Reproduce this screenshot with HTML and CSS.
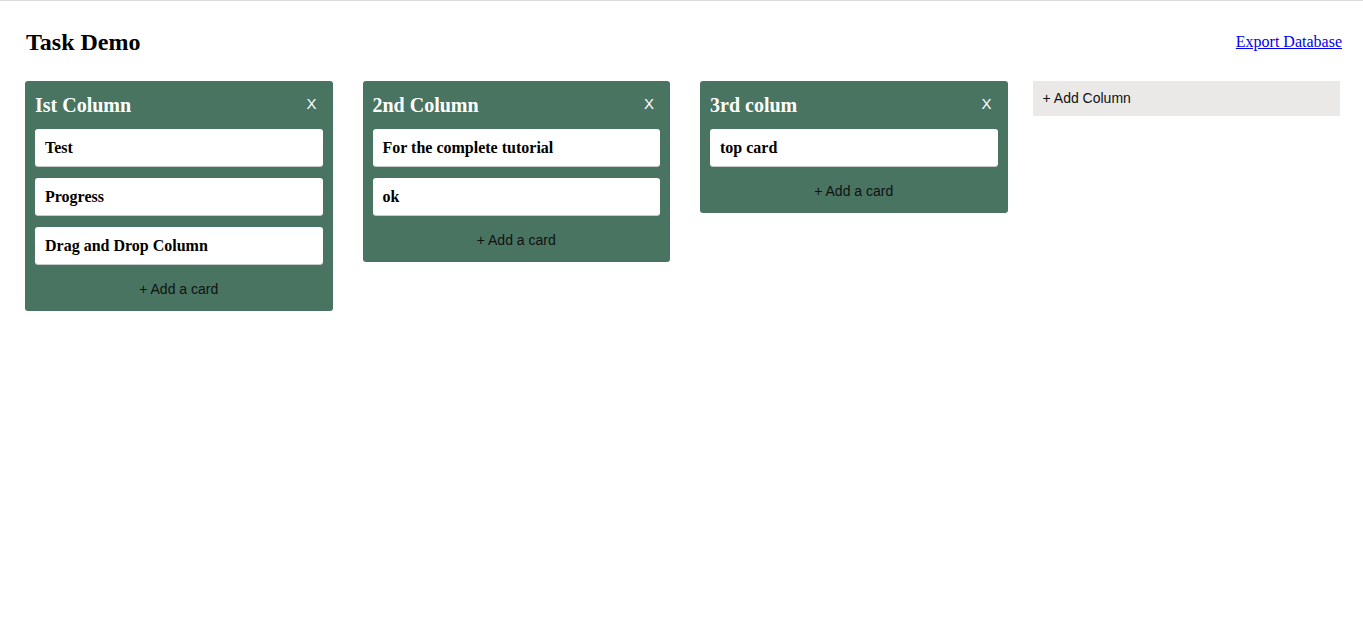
FILE: index.html
```html
<!DOCTYPE html>
<html>
<head>
<meta charset="utf-8">
<title>Task Demo</title>
<link rel="stylesheet" href="styles.css">
</head>
<body>
<div class="page">
  <header class="topbar">
    <h1 class="title">Task Demo</h1>
    <a class="export" href="#">Export Database</a>
  </header>
  <main class="board">
    <section class="column">
      <div class="col-head"><h2 class="col-title">Ist Column</h2><span class="close">X</span></div>
      <div class="card">Test</div>
      <div class="card">Progress</div>
      <div class="card">Drag and Drop Column</div>
      <div class="add-card">+ Add a card</div>
    </section>
    <section class="column">
      <div class="col-head"><h2 class="col-title">2nd Column</h2><span class="close">X</span></div>
      <div class="card">For the complete tutorial</div>
      <div class="card">ok</div>
      <div class="add-card">+ Add a card</div>
    </section>
    <section class="column">
      <div class="col-head"><h2 class="col-title">3rd colum</h2><span class="close">X</span></div>
      <div class="card">top card</div>
      <div class="add-card">+ Add a card</div>
    </section>
    <div class="add-column">+ Add Column</div>
  </main>
</div>
</body>
</html>
```

FILE: styles.css
```css
html, body {
  margin: 0;
  padding: 0;
  background: #fff;
}
body {
  border-top: 1px solid #dcdcdc;
  font-family: "Liberation Serif", "Times New Roman", serif;
  color: #000;
}
.page {
  padding: 0 21px 0 25px;
}
.topbar {
  display: flex;
  justify-content: space-between;
  align-items: center;
  height: 80px;
}
.title {
  margin: 2px 0 0 1px;
  font-size: 24px;
  font-weight: bold;
}
.export {
  color: #0000ee;
  font-size: 16px;
  text-decoration: underline;
  position: relative;
  top: 1px;
}
.board {
  display: flex;
  align-items: flex-start;
}
.column {
  width: 307.5px;
  box-sizing: border-box;
  background: #487461;
  border-radius: 3px;
  padding: 10px 10px 11px;
  margin-right: 30px;
}
.column:nth-child(3) {
  margin-right: 25px;
}
.col-head {
  display: flex;
  justify-content: space-between;
  align-items: center;
  height: 28px;
  margin-bottom: 10px;
}
.col-title {
  margin: 0;
  color: #fff;
  font-size: 20px;
  font-weight: bold;
}
.close {
  color: #fff;
  font-family: "Liberation Sans", Arial, sans-serif;
  font-size: 15px;
  margin-right: 6px;
  position: relative;
  top: -2px;
}
.card {
  background: #fff;
  border-radius: 3px;
  box-shadow: 0 1px 0 #c7cbc9;
  height: 37px;
  box-sizing: border-box;
  padding: 0 10px;
  display: flex;
  align-items: center;
  font-size: 16px;
  font-weight: bold;
  margin-bottom: 12px;
}
.add-card {
  text-align: center;
  font-family: "Liberation Sans", Arial, sans-serif;
  font-size: 14px;
  color: #111;
  height: 24px;
  line-height: 24px;
  position: relative;
  top: 1px;
}
.add-column {
  width: 307.5px;
  box-sizing: border-box;
  background: #ebe9e7;
  height: 35px;
  line-height: 35px;
  padding: 0 10px;
  font-family: "Liberation Sans", Arial, sans-serif;
  font-size: 14px;
  color: #111;
}
```
